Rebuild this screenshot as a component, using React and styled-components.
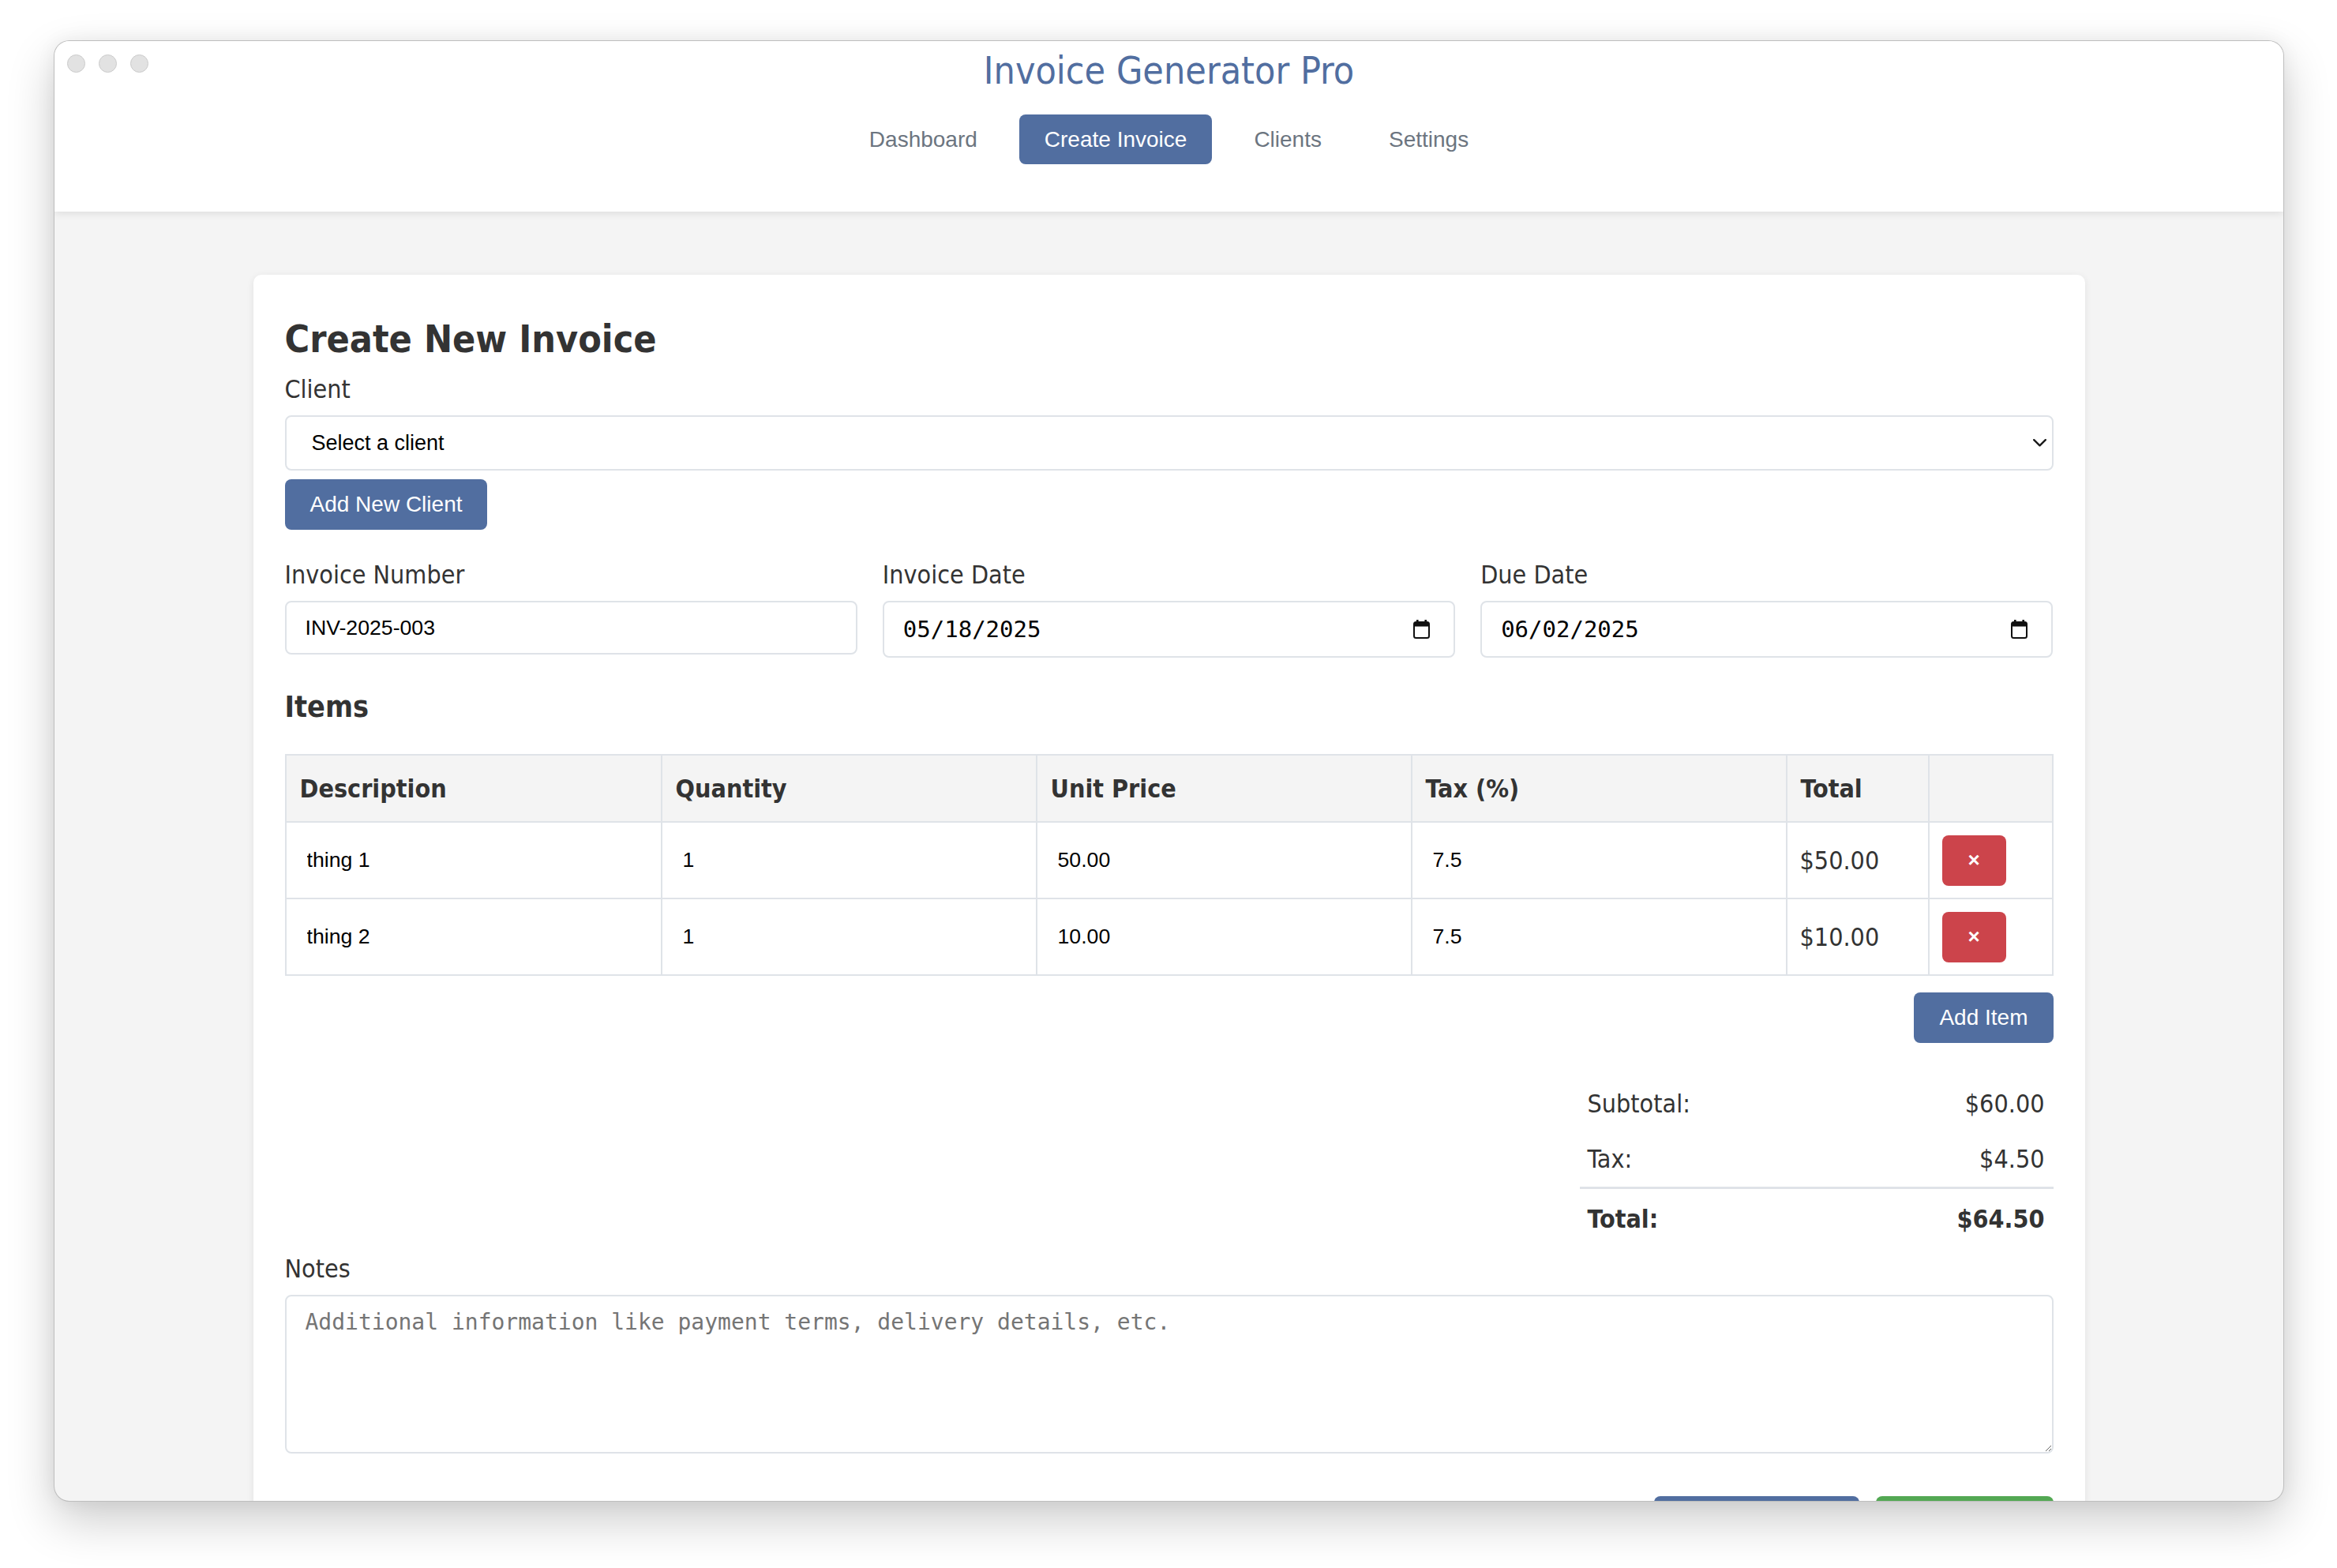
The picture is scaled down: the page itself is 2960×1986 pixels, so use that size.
import React from "react";
import styled, { createGlobalStyle } from "styled-components";

const UI = `"DejaVu Sans Condensed", "DejaVu Sans", Verdana, sans-serif`;
const SANS = `"Liberation Sans", Arial, Helvetica, sans-serif`;
const MONO = `"DejaVu Sans Mono", "Liberation Mono", monospace`;

const BLUE = "#516ea0";
const BORDER = "#dfe3e8";

const GlobalStyle = createGlobalStyle`
  html, body {
    margin: 0;
    padding: 0;
    background: #ffffff;
  }
  body {
    width: 2960px;
    height: 1986px;
    overflow: hidden;
  }
  *, *::before, *::after {
    box-sizing: border-box;
  }
`;

const items = [
  { id: 1, description: "thing 1", quantity: "1", price: "50.00", tax: "7.5", total: "$50.00" },
  { id: 2, description: "thing 2", quantity: "1", price: "10.00", tax: "7.5", total: "$10.00" },
];

const columns = [
  { label: "Description", width: 476 },
  { label: "Quantity", width: 475 },
  { label: "Unit Price", width: 475 },
  { label: "Tax (%)", width: 475 },
  { label: "Total", width: 180 },
  { label: "", width: 157 },
];

const navLinks = ["Dashboard", "Create Invoice", "Clients", "Settings"];

const CalendarIcon = () => (
  <svg width="21" height="24" viewBox="0 0 21 24">
    <rect x="4" y="0" width="2.6" height="5" fill="#111" />
    <rect x="14.4" y="0" width="2.6" height="5" fill="#111" />
    <rect x="1" y="3" width="19" height="20" rx="2.5" fill="none" stroke="#111" strokeWidth="2" />
    <rect x="1" y="3" width="19" height="5.5" rx="1.5" fill="#111" />
  </svg>
);

const Chevron = () => (
  <svg width="17" height="10" viewBox="0 0 17 10">
    <polyline points="1.2,1.2 8.5,8.3 15.8,1.2" fill="none" stroke="#1a1a1a" strokeWidth="2.4" strokeLinecap="round" strokeLinejoin="round" />
  </svg>
);

export default function App() {
  return (
    <>
      <GlobalStyle />
      <Stage>
        <Window>
          <TrafficLights>
            <Light />
            <Light />
            <Light />
          </TrafficLights>

          <Header>
            <AppTitle>Invoice Generator Pro</AppTitle>
            <Nav>
              {navLinks.map((link) => (
                <NavLink key={link} $active={link === "Create Invoice"}>
                  {link}
                </NavLink>
              ))}
            </Nav>
          </Header>

          <Main>
            <Card>
              <PageTitle>Create New Invoice</PageTitle>

              <Label>Client</Label>
              <FieldBox $height={70} $padLeft={32} $padRight={7}>
                <BareSelect defaultValue="">
                  <option value="">Select a client</option>
                </BareSelect>
                <Chevron />
              </FieldBox>
              <PrimaryButton $mt={11}>Add New Client</PrimaryButton>

              <FieldRow>
                <FieldGroup>
                  <Label>Invoice Number</Label>
                  <FieldBox $height={68} $padLeft={24} $padRight={24}>
                    <BareInput defaultValue="INV-2025-003" />
                  </FieldBox>
                </FieldGroup>
                <FieldGroup>
                  <Label>Invoice Date</Label>
                  <FieldBox $height={72} $padLeft={24} $padRight={30}>
                    <BareInput $mono defaultValue="05/18/2025" />
                    <CalendarIcon />
                  </FieldBox>
                </FieldGroup>
                <FieldGroup>
                  <Label>Due Date</Label>
                  <FieldBox $height={72} $padLeft={24} $padRight={30}>
                    <BareInput $mono defaultValue="06/02/2025" />
                    <CalendarIcon />
                  </FieldBox>
                </FieldGroup>
              </FieldRow>

              <SectionTitle>Items</SectionTitle>
              <ItemsTable>
                <colgroup>
                  {columns.map((col, i) => (
                    <Col key={i} $w={col.width} />
                  ))}
                </colgroup>
                <thead>
                  <tr>
                    {columns.map((col, i) => (
                      <Th key={i}>{col.label}</Th>
                    ))}
                  </tr>
                </thead>
                <tbody>
                  {items.map((item) => (
                    <tr key={item.id}>
                      <Td>
                        <CellInput defaultValue={item.description} />
                      </Td>
                      <Td>
                        <CellInput defaultValue={item.quantity} />
                      </Td>
                      <Td>
                        <CellInput defaultValue={item.price} />
                      </Td>
                      <Td>
                        <CellInput defaultValue={item.tax} />
                      </Td>
                      <Td>
                        <Amount>{item.total}</Amount>
                      </Td>
                      <Td>
                        <DeleteButton>×</DeleteButton>
                      </Td>
                    </tr>
                  ))}
                </tbody>
              </ItemsTable>

              <ButtonRow $mt={21}>
                <PrimaryButton>Add Item</PrimaryButton>
              </ButtonRow>

              <Summary>
                <SummaryRow>
                  <span>Subtotal:</span>
                  <span>$60.00</span>
                </SummaryRow>
                <SummaryRow>
                  <span>Tax:</span>
                  <span>$4.50</span>
                </SummaryRow>
                <SummaryRow $total>
                  <span>Total:</span>
                  <span>$64.50</span>
                </SummaryRow>
              </Summary>

              <FieldGroup $mt={9}>
                <Label>Notes</Label>
                <NotesArea placeholder="Additional information like payment terms, delivery details, etc." />
              </FieldGroup>

              <ButtonRow $mt={54}>
                <PrimaryButton>Preview Invoice</PrimaryButton>
                <PrimaryButton $green>Save Invoice</PrimaryButton>
              </ButtonRow>
            </Card>
          </Main>
        </Window>
      </Stage>
    </>
  );
}

// Styled Components
const Stage = styled.div`
  width: 2960px;
  height: 1986px;
  padding: 51px 0 0 68px;
  background: #ffffff;
`;

const Window = styled.div`
  position: relative;
  width: 2825px;
  height: 1851px;
  display: flex;
  flex-direction: column;
  background: #f4f4f4;
  border: 1px solid rgba(0, 0, 0, 0.22);
  border-radius: 20px;
  overflow: hidden;
  box-shadow: 0 24px 60px rgba(0, 0, 0, 0.2), 0 0 24px rgba(0, 0, 0, 0.06);
`;

const TrafficLights = styled.div`
  position: absolute;
  top: 17px;
  left: 16px;
  display: flex;
  gap: 17px;
  z-index: 5;
`;

const Light = styled.span`
  width: 23px;
  height: 23px;
  border-radius: 50%;
  background: #e2e2e2;
  border: 1px solid #cbcbcb;
`;

const Header = styled.header`
  position: relative;
  z-index: 2;
  flex: none;
  background: #ffffff;
  padding: 8px 0 60px;
  text-align: center;
  box-shadow: 0 2px 10px rgba(0, 0, 0, 0.1);
`;

const AppTitle = styled.h1`
  margin: 0;
  font-family: ${UI};
  font-size: 48px;
  line-height: 58px;
  font-weight: normal;
  color: ${BLUE};
`;

const Nav = styled.nav`
  margin-top: 27px;
  display: flex;
  justify-content: center;
  gap: 21px;
`;

const NavLink = styled.a`
  display: block;
  padding: 16px 32px;
  border-radius: 8px;
  font-family: ${SANS};
  font-size: 28px;
  line-height: 31px;
  color: ${(p) => (p.$active ? "#ffffff" : "#6c7580")};
  background: ${(p) => (p.$active ? BLUE : "transparent")};
  cursor: pointer;
`;

const Main = styled.main`
  flex: 1;
  min-height: 0;
  overflow: hidden;
  padding-top: 80px;
`;

const Card = styled.section`
  width: 2320px;
  margin: 0 auto;
  padding: 40px;
  background: #ffffff;
  border-radius: 10px;
  box-shadow: 0 2px 10px rgba(0, 0, 0, 0.08);
  color: #333333;
  font-family: ${UI};
`;

const PageTitle = styled.h2`
  margin: 12px 0 16px;
  font-size: 48px;
  line-height: 58px;
  font-weight: bold;
  color: #333333;
`;

const Label = styled.label`
  display: block;
  margin-bottom: 14px;
  font-size: 32px;
  line-height: 38px;
  color: #333333;
`;

const FieldRow = styled.div`
  margin-top: 38px;
  display: grid;
  grid-template-columns: repeat(3, 1fr);
  gap: 32px;
  align-items: start;
`;

const FieldGroup = styled.div`
  margin-top: ${(p) => p.$mt || 0}px;
  display: flex;
  flex-direction: column;
`;

const FieldBox = styled.div`
  height: ${(p) => p.$height}px;
  display: flex;
  align-items: center;
  gap: 12px;
  padding: 0 ${(p) => p.$padRight}px 0 ${(p) => p.$padLeft}px;
  border: 2px solid ${BORDER};
  border-radius: 8px;
  background: #ffffff;
`;

const BareInput = styled.input`
  flex: 1;
  min-width: 0;
  padding: 0;
  border: none;
  outline: none;
  background: transparent;
  color: #000000;
  font-family: ${(p) => (p.$mono ? MONO : SANS)};
  font-size: ${(p) => (p.$mono ? "29px" : "26.67px")};
`;

const BareSelect = styled.select`
  flex: 1;
  padding: 0;
  border: none;
  outline: none;
  appearance: none;
  background: transparent;
  color: #000000;
  font-family: ${SANS};
  font-size: 27px;
`;

const PrimaryButton = styled.button`
  align-self: flex-start;
  margin-top: ${(p) => p.$mt || 0}px;
  height: 64px;
  padding: 0 32px;
  border: none;
  border-radius: 8px;
  background: ${(p) => (p.$green ? "#53a853" : BLUE)};
  color: #ffffff;
  font-family: ${SANS};
  font-size: 28px;
  cursor: pointer;
`;

const ButtonRow = styled.div`
  margin-top: ${(p) => p.$mt || 0}px;
  display: flex;
  justify-content: flex-end;
  gap: 21px;
`;

const SectionTitle = styled.h3`
  margin: 40px 0 37px;
  font-size: 37.44px;
  line-height: 45px;
  font-weight: bold;
  color: #333333;
`;

const ItemsTable = styled.table`
  width: 2238px;
  table-layout: fixed;
  border-collapse: collapse;
  border: 2px solid ${BORDER};
`;

const Col = styled.col`
  width: ${(p) => p.$w}px;
`;

const Th = styled.th`
  height: 85px;
  padding: 0 17px;
  text-align: left;
  vertical-align: middle;
  background: #f4f4f4;
  border: 2px solid ${BORDER};
  font-size: 32px;
  line-height: 38px;
  font-weight: bold;
  color: #333333;
`;

const Td = styled.td`
  height: 97px;
  padding: 0 16px;
  vertical-align: middle;
  border: 2px solid ${BORDER};
`;

const CellInput = styled.input`
  display: block;
  width: 100%;
  height: 64px;
  padding: 0 10px;
  border: none;
  outline: none;
  background: transparent;
  color: #000000;
  font-family: ${SANS};
  font-size: 26.67px;
`;

const Amount = styled.span`
  font-size: 32px;
  line-height: 38px;
  color: #333333;
`;

const DeleteButton = styled.button`
  display: block;
  width: 81px;
  height: 64px;
  padding: 0;
  border: none;
  border-radius: 8px;
  background: #cc444b;
  color: #ffffff;
  font-family: ${SANS};
  font-size: 26px;
  font-weight: bold;
  cursor: pointer;
`;

const Summary = styled.div`
  width: 600px;
  margin: 42px 0 0 auto;
`;

const SummaryRow = styled.div`
  display: flex;
  justify-content: space-between;
  padding: ${(p) => (p.$total ? "19px 11px 16px 10px" : "16px 11px 16px 10px")};
  border-top: ${(p) => (p.$total ? `3px solid ${BORDER}` : "none")};
  font-size: 32px;
  line-height: 38px;
  font-weight: ${(p) => (p.$total ? "bold" : "normal")};
  color: #333333;
`;

const NotesArea = styled.textarea`
  display: block;
  width: 100%;
  height: 201px;
  padding: 16px 24px;
  border: 2px solid ${BORDER};
  border-radius: 8px;
  outline: none;
  font-family: ${MONO};
  font-size: 28px;
  color: #000000;
  &::placeholder {
    color: #757575;
  }
`;
